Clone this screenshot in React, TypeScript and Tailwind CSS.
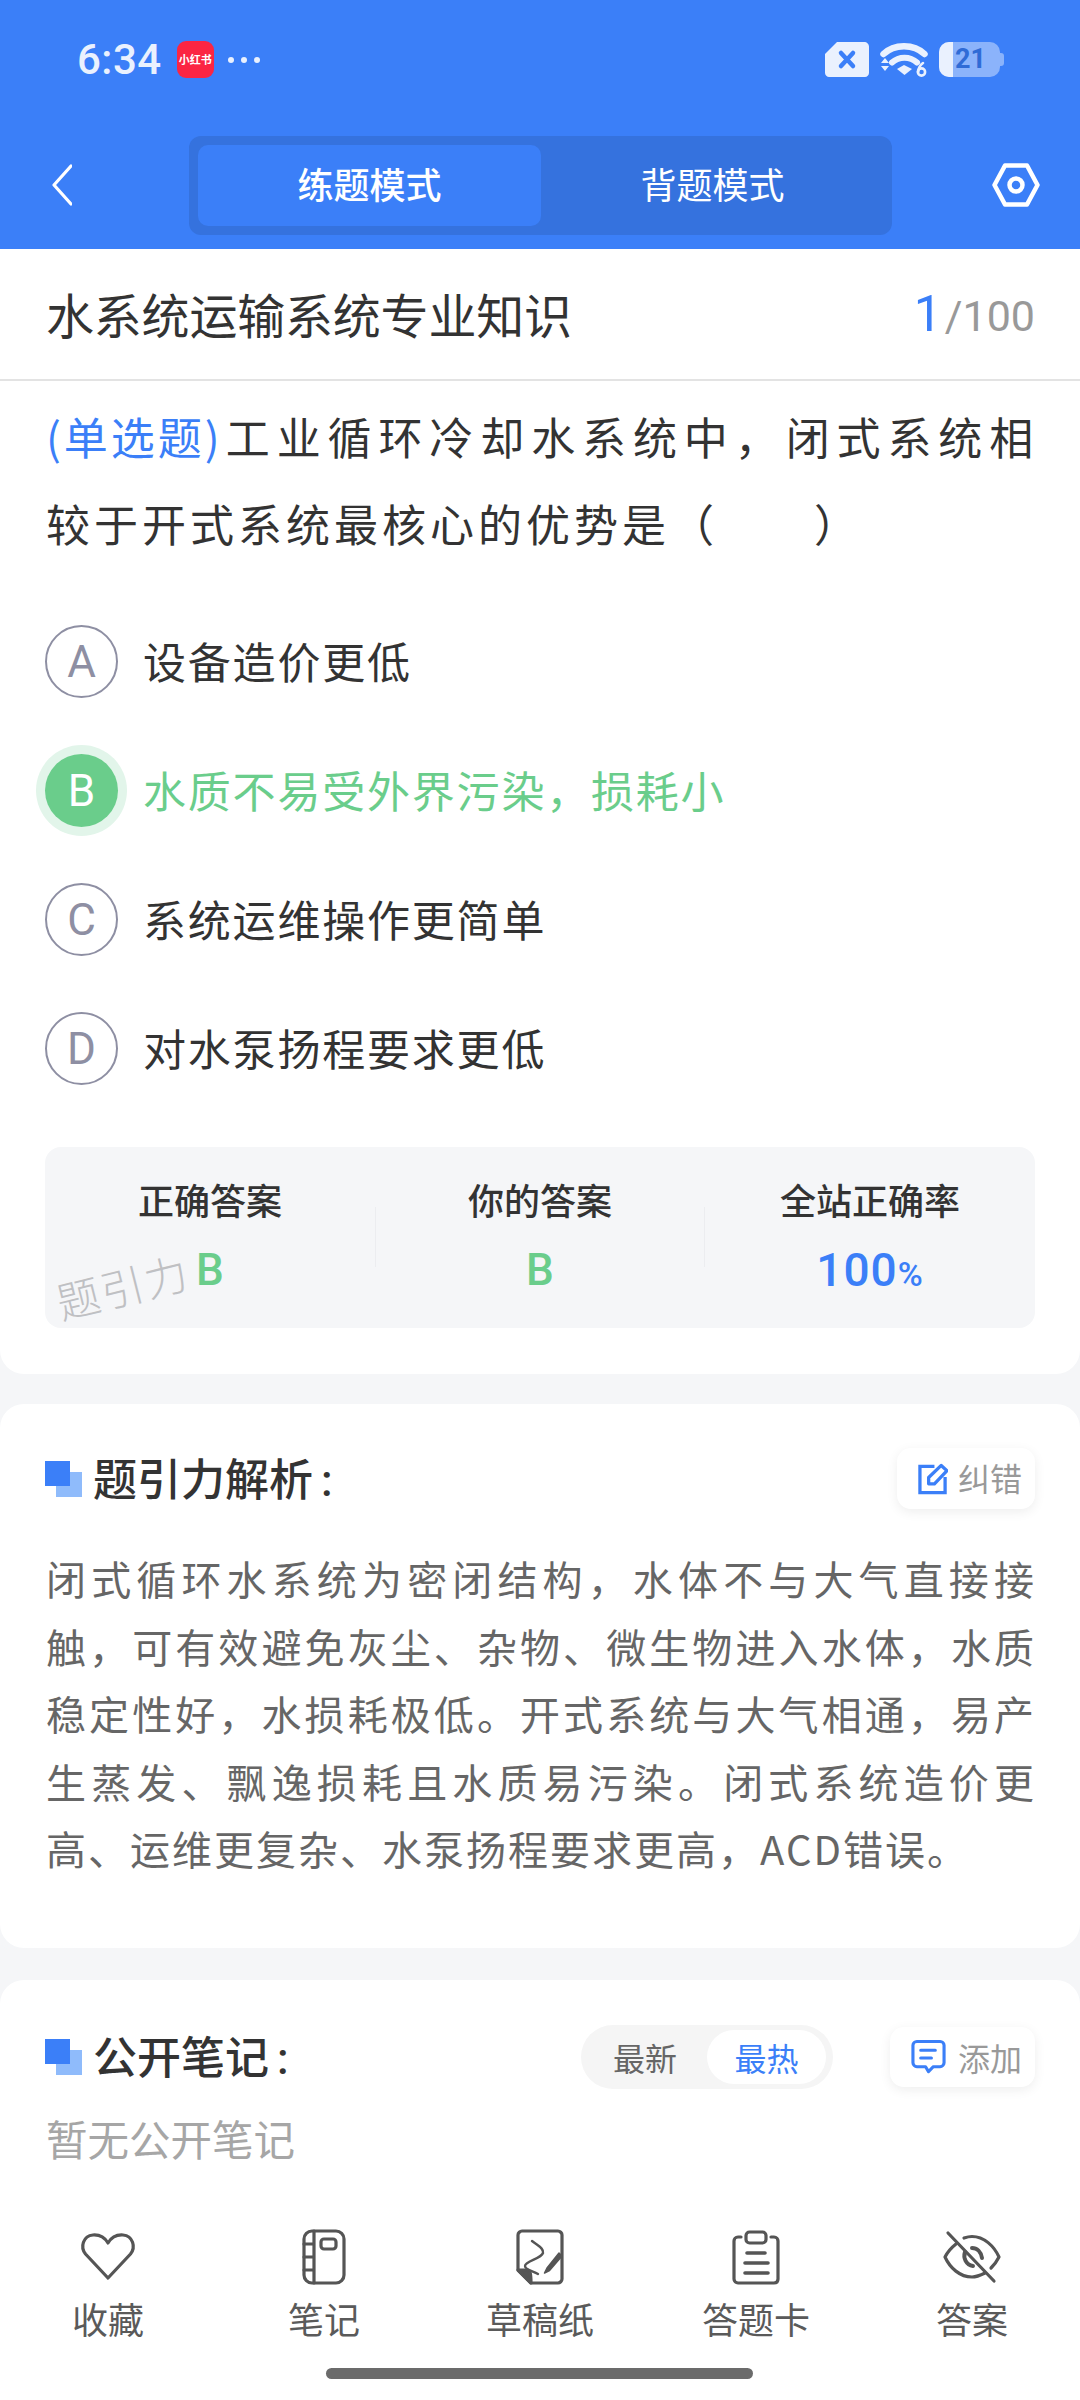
const CJK = "font-['Noto_Sans_CJK_SC','Noto_Sans',sans-serif]";

function Wifi() {
  return (
    <svg width="48" height="36" viewBox="0 0 48 36" fill="none">
      <path d="M3.5 12 C14 1.5 34 1.5 44.5 12" stroke="#EAF1FE" strokeWidth="6.5" strokeLinecap="round" />
      <path d="M12 20.5 C19 14 30 14 37 20.5" stroke="#EAF1FE" strokeWidth="6" strokeLinecap="round" />
      <path d="M17 27 L24 23 L32 27 L24.5 33 Z" fill="#EAF1FE" />
      <path d="M1 21 L5 16 L9 21 Z M1 24 L9 24 L5 29 Z" fill="#EAF1FE" />
      <circle cx="41.5" cy="30" r="3.6" stroke="#EAF1FE" strokeWidth="2.6" />
      <path d="M43 21 C40 23 38.5 26 38 30" stroke="#EAF1FE" strokeWidth="2.6" strokeLinecap="round" />
    </svg>
  );
}

function SectionMark() {
  return (
    <svg width="37" height="36" viewBox="0 0 37 36" className="shrink-0">
      <rect x="11" y="11" width="26" height="25" fill="#8FBBFB" />
      <rect x="0" y="0" width="25" height="25" fill="#3B7FF8" />
    </svg>
  );
}

function NavIcon({ name }: { name: string }) {
  const common = { stroke: '#555', strokeWidth: 3.2, fill: 'none', strokeLinecap: 'round' as const, strokeLinejoin: 'round' as const };
  return (
    <svg width="60" height="60" viewBox="0 0 60 60">
      {name === 'heart' && (
        <path d="M30 51 L7.5 27 C2 20 5 9 15 8 C22 7.5 27 11 30 16 C33 11 38 7.5 45 8 C55 9 58 20 52.5 27 Z" {...common} />
      )}
      {name === 'note' && (
        <g {...common}>
          <rect x="10" y="4" width="40" height="52" rx="8" />
          <path d="M20 4 V56 M10 17 H20 M10 30 H20 M10 43 H20" />
          <rect x="27" y="12" width="15" height="10" rx="3" />
        </g>
      )}
      {name === 'draft' && (
        <g {...common}>
          <path d="M21 56 H48 C50 56 52 54 52 52 V8 C52 6 50 4 48 4 H12 C10 4 8 6 8 8 V43 L21 56 Z" />
          <path d="M8 43 H17 C20 43 21 46 21 56 Z" fill="#555" />
          <path d="M22 14 C28 19 34 21 33 26 C31 32 15 34 15 39 C15 43 23 44 28 47" strokeWidth="2.4" />
          <path d="M37 41 L34.5 46 L39.5 43.5 L52 29 L49 26 Z" fill="#555" strokeWidth="1.5" />
        </g>
      )}
      {name === 'card' && (
        <g {...common}>
          <path d="M15 10 H12 C9.5 10 8 12 8 14 V52 C8 54.5 10 56 12 56 H48 C50.5 56 52 54.5 52 52 V14 C52 12 50.5 10 48 10 H45" />
          <rect x="20" y="5" width="20" height="11" rx="3.5" />
          <path d="M21 26 H39 M19 36 H42 M19 46 H42" strokeWidth="3.6" />
        </g>
      )}
      {name === 'eye' && (
        <g {...common}>
          <path d="M14 17 C9 21 5 26 3 30 C8 41 18 50 30 50 C35 50 39 48 43 46" />
          <path d="M22 11 C25 10 27 9.5 30 9.5 C42 9.5 52 19 57 30 C55 34 52 38 49 41" />
          <path d="M23 25 C21 31 24 38 31 39 M30 21 C35 21 39 25 40 31" strokeWidth="4" />
          <path d="M6 6 L52 54" />
        </g>
      )}
    </svg>
  );
}

const options = [
  { key: 'A', text: '设备造价更低' },
  { key: 'B', text: '水质不易受外界污染，损耗小', correct: true },
  { key: 'C', text: '系统运维操作更简单' },
  { key: 'D', text: '对水泵扬程要求更低' },
];

const explainLines = [
  '闭式循环水系统为密闭结构，水体不与大气直接接',
  '触，可有效避免灰尘、杂物、微生物进入水体，水质',
  '稳定性好，水损耗极低。开式系统与大气相通，易产',
  '生蒸发、飘逸损耗且水质易污染。闭式系统造价更',
];

const navItems = [
  { icon: 'heart', label: '收藏' },
  { icon: 'note', label: '笔记' },
  { icon: 'draft', label: '草稿纸' },
  { icon: 'card', label: '答题卡' },
  { icon: 'eye', label: '答案' },
];

export default function App() {
  return (
    <div className={`${CJK} w-[1080px] h-[2400px] flex flex-col overflow-hidden bg-[#F5F6F8] text-[#333]`}>
      {/* Blue header */}
      <div className="h-[249px] shrink-0 bg-[#3B7FF8] flex flex-col">
        <div className="h-[136px] shrink-0 pl-[77px] pr-[76px] pb-[17px] flex items-center justify-between text-[#EAF1FE]">
          <div className="flex items-center">
            <span className="font-['Roboto',sans-serif] font-medium text-[42px] leading-none tracking-[0.5px]">6:34</span>
            <span className="ml-[15px] w-[37px] h-[37px] rounded-[9px] bg-[#FB2543] flex items-center justify-center text-white text-[11px] font-bold whitespace-nowrap">小红书</span>
            <span className="ml-[14px] flex gap-[7px]">
              <i className="w-[6px] h-[6px] rounded-full bg-[#EAF1FE]" />
              <i className="w-[6px] h-[6px] rounded-full bg-[#EAF1FE]" />
              <i className="w-[6px] h-[6px] rounded-full bg-[#EAF1FE]" />
            </span>
          </div>
          <div className="flex items-center gap-[11px]">
            <svg width="44" height="35" viewBox="0 0 44 35">
              <path d="M12 0 H39 C42 0 44 2 44 5 V31 C44 33 42 35 40 35 H4 C2 35 0 33 0 31 V12 Z" fill="#EAF1FE" />
              <path d="M16 11 L28 24 M28 11 L16 24" stroke="#3B7FF8" strokeWidth="4.5" strokeLinecap="round" />
            </svg>
            <Wifi />
            <div className="relative w-[65px] h-[35px]">
              <div className="absolute left-0 top-0 w-[61px] h-[35px] rounded-[10px] bg-[#8BB3FB]" />
              <div className="absolute right-0 top-[11px] w-[5px] h-[13px] rounded-r-[3px] bg-[#8BB3FB]" />
              <div className="absolute left-0 top-0 w-[14px] h-[35px] rounded-l-[10px] bg-[#EAF1FE]" />
              <span className="absolute left-[16px] top-0 h-[35px] flex items-center font-['Roboto',sans-serif] font-bold text-[27px] leading-none text-[#2F6BD6]">21</span>
            </div>
          </div>
        </div>
        <div className="flex-1 flex items-start pl-[52px] pr-[40px]">
          <svg width="20" height="42" viewBox="0 0 20 42" className="mt-[28px] shrink-0" fill="none">
            <path d="M19 2 L2 21 L19 40" stroke="#fff" strokeWidth="3.2" strokeLinecap="round" strokeLinejoin="round" />
          </svg>
          <div className="ml-[117px] w-[703px] h-[99px] rounded-[12px] bg-[#3572DE] p-[9px] pr-[8px] flex text-[36px] text-white">
            <div className="w-[343px] pb-[5px] rounded-[10px] bg-[#3B7FF8] flex items-center justify-center font-medium">练题模式</div>
            <div className="w-[343px] pb-[5px] flex items-center justify-center">背题模式</div>
          </div>
          <svg width="48" height="44" viewBox="0 0 48 44" className="ml-[100px] mt-[27px] shrink-0" fill="none">
            <path d="M13 2.5 H35 L45.5 22 L35 41.5 H13 L2.5 22 Z" stroke="#fff" strokeWidth="4.5" strokeLinejoin="round" />
            <circle cx="24" cy="22" r="6.5" stroke="#fff" strokeWidth="4.5" />
          </svg>
        </div>
      </div>

      {/* Question card */}
      <div className="h-[1125px] shrink-0 bg-white rounded-b-[24px]">
        <div className="h-[132px] border-b-[2px] border-[#E3E3E3] pl-[46px] pr-[45px] pb-[2px] flex items-center justify-between">
          <span className="text-[48px] tracking-[-0.2px] leading-none text-[#333]">水系统运输系统专业知识</span>
          <span className="font-['Roboto',sans-serif] flex items-baseline text-[#999] mt-[2px]">
            <span className="text-[50px] text-[#3B7FF8]">1</span>
            <span className="text-[43px] ml-[3px]">/100</span>
          </span>
        </div>
        <div className="pt-[12px] px-[46px] text-[44px] leading-[87px] whitespace-nowrap">
          <div>
            <span className="text-[#3B7FF8] tracking-[3px] mr-[3px]">(单选题)</span>
            <span className="tracking-[6.9px]">工业循环冷却水系统中，闭式系统相</span>
          </div>
          <div className="tracking-[4px]">较于开式系统最核心的优势是（　　）</div>
        </div>
        <div className="mt-[30px] px-[45px]">
          {options.map((o) => (
            <div key={o.key} className="h-[129px] flex items-center">
              <div
                className={
                  o.correct
                    ? "w-[73px] h-[73px] shrink-0 rounded-full bg-[#6ACD8B] text-white flex items-center justify-center text-[44px] font-['Roboto',sans-serif] shadow-[0_0_0_9px_#E2F5EA]"
                    : "w-[73px] h-[73px] shrink-0 rounded-full border-[2px] border-[#8E8FA3] text-[#8E8FA3] flex items-center justify-center text-[44px] font-['Roboto',sans-serif]"
                }
              >
                {o.key}
              </div>
              <span className={`ml-[25px] pb-[2px] text-[43px] tracking-[1.8px] ${o.correct ? 'text-[#6ACD8B]' : 'text-[#333]'}`}>{o.text}</span>
            </div>
          ))}
        </div>
        <div className="relative mt-[34px] mx-[45px] h-[181px] rounded-[16px] bg-[#F5F6F8] grid grid-cols-3">
          <div className="flex flex-col items-center pt-[28px]">
            <span className="text-[36px] leading-[48px] font-medium">正确答案</span>
            <span className="mt-[17px] font-['Roboto',sans-serif] text-[44px] leading-[60px] font-medium text-[#6ACD8B]">B</span>
          </div>
          <div className="flex flex-col items-center pt-[28px] relative">
            <span className="text-[36px] leading-[48px] font-medium">你的答案</span>
            <span className="mt-[17px] font-['Roboto',sans-serif] text-[44px] leading-[60px] font-medium text-[#6ACD8B]">B</span>
            <i className="absolute left-0 top-[60px] w-[1px] h-[60px] bg-[#ECEDF0]" />
            <i className="absolute right-0 top-[60px] w-[1px] h-[60px] bg-[#ECEDF0]" />
          </div>
          <div className="flex flex-col items-center pt-[28px]">
            <span className="text-[36px] leading-[48px] font-medium">全站正确率</span>
            <span className="mt-[17px] font-['Roboto',sans-serif] text-[46px] leading-[60px] font-medium tracking-[1px] text-[#3B7FF8]">
              100<span className="text-[34px]">%</span>
            </span>
          </div>
          <span className="absolute left-[10px] top-[117px] text-[43px] leading-none font-light tracking-[2px] text-[#BFC0C3] -rotate-[14deg] whitespace-nowrap">题引力</span>
        </div>
      </div>

      {/* Analysis card */}
      <div className="mt-[30px] h-[544px] shrink-0 bg-white rounded-[24px] px-[46px] pt-[44px]">
        <div className="h-[61px] -mx-[1px] flex items-center justify-between">
          <div className="flex items-center">
            <SectionMark />
            <span className="ml-[11px] text-[44px] font-medium leading-none">题引力解析<span className="font-['Roboto',sans-serif] ml-[8px]">:</span></span>
          </div>
          <div className="w-[138px] h-[61px] rounded-[14px] bg-white shadow-[0_3px_12px_rgba(0,0,0,0.07)] flex items-center pl-[21px] gap-[10px]">
            <svg width="30" height="33" viewBox="0 0 31 33" fill="none" stroke="#3B7FF8" strokeWidth="3.4">
              <path d="M17 4 H2 V31 H28 V15" />
              <path d="M11 22 L11 15.5 L24 3 L30 8.5 L17 22 Z" strokeLinejoin="round" />
            </svg>
            <span className="pb-[3px] text-[32px] text-[#999]">纠错</span>
          </div>
        </div>
        <div className="mt-[36px] text-[40px] leading-[67.5px] text-[#666]">
          {explainLines.map((line) => (
            <div key={line} className="[text-align-last:justify]">{line}</div>
          ))}
          <div className="tracking-[2px]">高、运维更复杂、水泵扬程要求更高，ACD错误。</div>
        </div>
      </div>

      {/* Notes card */}
      <div className="mt-[32px] flex-1 min-h-0 bg-white rounded-t-[24px] px-[46px] pt-[45px]">
        <div className="h-[64px] -mx-[1px] flex items-center">
          <SectionMark />
          <span className="ml-[11px] text-[44px] font-medium leading-none">公开笔记<span className="font-['Roboto',sans-serif] ml-[8px]">:</span></span>
          <div className="ml-auto w-[252px] h-[64px] rounded-full bg-[#F5F5F5] flex items-center text-[32px] pl-[32px] pr-[7px]">
            <span className="text-[#666]">最新</span>
            <span className="ml-auto w-[119px] h-[54px] rounded-full bg-white text-[#3B7FF8] flex items-center justify-center">最热</span>
          </div>
          <div className="ml-[57px] w-[145px] h-[60px] rounded-[14px] bg-white shadow-[0_3px_12px_rgba(0,0,0,0.07)] flex items-center pl-[21px] gap-[12px]">
            <svg width="35" height="36" viewBox="0 0 36 36" fill="none" stroke="#3B7FF8" strokeWidth="3.2" strokeLinecap="round" strokeLinejoin="round">
              <path d="M6 2 H30 C32 2 34 4 34 6 V24 C34 26 32 28 30 28 H23 L18 33 L15 28 H6 C4 28 2 26 2 24 V6 C2 4 4 2 6 2 Z" />
              <path d="M10 11 H25 M10 19 H21" />
            </svg>
            <span className="text-[32px] text-[#999]">添加</span>
          </div>
        </div>
        <div className="mt-[24px] text-[41.5px] leading-[50px] text-[#A6A6A6]">暂无公开笔记</div>
      </div>

      {/* Bottom toolbar */}
      <div className="h-[200px] shrink-0 bg-white relative">
        <div className="grid grid-cols-5 pt-[27px]">
          {navItems.map((item) => (
            <div key={item.label} className="flex flex-col items-center">
              <NavIcon name={item.icon} />
              <span className="mt-[8px] text-[36px] leading-[46px] text-[#5A5A5A]">{item.label}</span>
            </div>
          ))}
        </div>
        <div className="absolute left-[326px] bottom-[21px] w-[427px] h-[11px] rounded-full bg-[#6B6B6B]" />
      </div>
    </div>
  );
}
